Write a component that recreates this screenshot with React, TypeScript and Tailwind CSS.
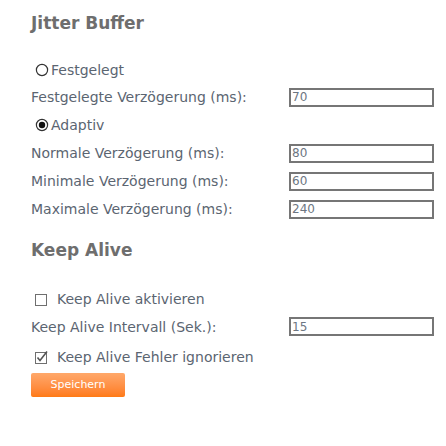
import React from 'react'

const labelCls = "text-[14px] leading-none text-[#5b6571]"
const inputCls = "w-[145px] h-[19px] border-2 border-[#767676] bg-white px-[1px] text-[12px] text-[#6d7682] outline-none"

function Radio({ checked }: { checked?: boolean }) {
  return (
    <svg width="14" height="14" viewBox="0 0 14 14" className="shrink-0">
      <circle cx="7" cy="7" r="5.6" fill="white" stroke="#333" strokeWidth="1.2" />
      {checked && <circle cx="7" cy="7" r="3.2" fill="#111" />}
    </svg>
  )
}

function Check({ checked }: { checked?: boolean }) {
  return (
    <svg width="15" height="15" viewBox="0 0 15 15" className="shrink-0 overflow-visible">
      <rect x="1.5" y="2.5" width="11" height="11" fill="white" stroke="#6f6f6f" strokeWidth="1" />
      {checked && <path d="M3.5 7.5 L6 10.5 L13 1.5" fill="none" stroke="#555" strokeWidth="1.6" />}
    </svg>
  )
}

function Row({ label, value }: { label: string; value: string }) {
  return (
    <div className="flex items-center h-[28px]">
      <div className={`w-[258px] ${labelCls}`}>{label}</div>
      <input className={inputCls} defaultValue={value} />
    </div>
  )
}

export default function App() {
  return (
    <div className="w-[446px] h-[446px] bg-white pl-[31px] pt-[11px]" style={{ fontFamily: '"DejaVu Sans", Verdana, sans-serif' }}>
      <h2 className="h-[24px] leading-[24px] text-[17px] font-bold text-[#6e6e6e]">Jitter Buffer</h2>

      <div className="mt-[22px] flex items-center h-[26px] pl-[4px] gap-[2px]">
        <Radio />
        <span className={labelCls}>Festgelegt</span>
      </div>
      <Row label="Festgelegte Verzögerung (ms):" value="70" />
      <div className="flex items-center h-[28px] pl-[4px] gap-[2px]">
        <Radio checked />
        <span className={labelCls}>Adaptiv</span>
      </div>
      <Row label="Normale Verzögerung (ms):" value="80" />
      <Row label="Minimale Verzögerung (ms):" value="60" />
      <Row label="Maximale Verzögerung (ms):" value="240" />

      <h2 className="mt-[15px] h-[24px] leading-[24px] text-[17px] font-bold text-[#6e6e6e]">Keep Alive</h2>

      <div className="mt-[23px] flex items-center h-[28px] pl-[3px] gap-[8px]">
        <Check />
        <span className={labelCls}>Keep Alive aktivieren</span>
      </div>
      <div className="flex items-center h-[27px]">
        <div className={`w-[258px] ${labelCls}`}>Keep Alive Intervall (Sek.):</div>
        <input className={inputCls} defaultValue="15" />
      </div>
      <div className="mt-[3px] flex items-center h-[28px] pl-[3px] gap-[8px]">
        <Check checked />
        <span className={labelCls}>Keep Alive Fehler ignorieren</span>
      </div>
      <button className="mt-[2px] w-[94px] h-[24px] rounded-[2px] bg-gradient-to-b from-[#ffa86a] to-[#ff7a12] text-[11px] text-white">
        Speichern
      </button>
    </div>
  )
}
